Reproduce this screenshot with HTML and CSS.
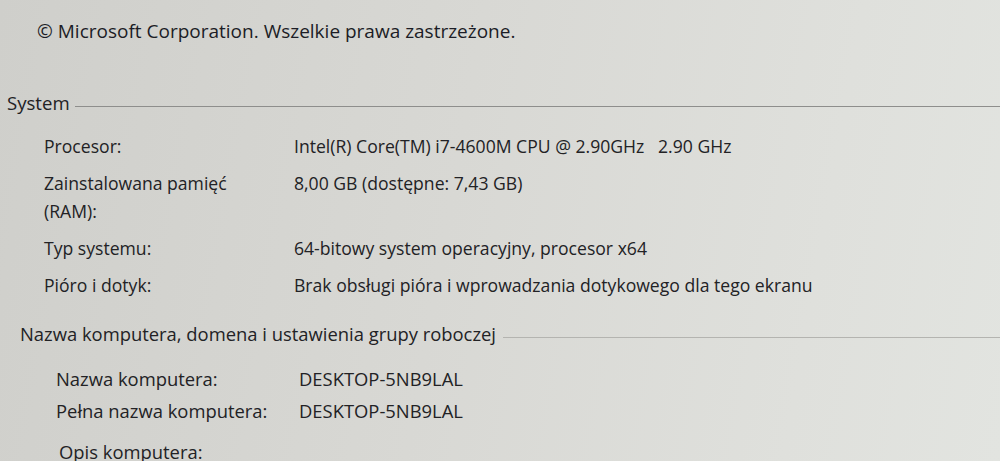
FILE: index.html
```html
<!DOCTYPE html>
<html lang="pl">
<head>
<meta charset="utf-8">
<title>System</title>
<link rel="stylesheet" href="styles.css">
</head>
<body>
<div class="page">
  <p class="copyright">© Microsoft Corporation. Wszelkie prawa zastrzeżone.</p>

  <div class="section-head system-head">
    <span class="section-title">System</span>
    <span class="rule"></span>
  </div>
  <div class="rows system-rows">
    <div class="label">Procesor:</div>
    <div class="value">Intel(R) Core(TM) i7-4600M CPU @ 2.90GHz&nbsp;&nbsp;&nbsp;2.90 GHz</div>
    <div class="label">Zainstalowana pamięć<br>(RAM):</div>
    <div class="value">8,00 GB (dostępne: 7,43 GB)</div>
    <div class="label">Typ systemu:</div>
    <div class="value">64-bitowy system operacyjny, procesor x64</div>
    <div class="label">Pióro i dotyk:</div>
    <div class="value">Brak obsługi pióra i wprowadzania dotykowego dla tego ekranu</div>
  </div>

  <div class="section-head name-head">
    <span class="section-title">Nazwa komputera, domena i ustawienia grupy roboczej</span>
    <span class="rule faint"></span>
  </div>
  <div class="rows name-rows">
    <div class="label">Nazwa komputera:</div>
    <div class="value">DESKTOP-5NB9LAL</div>
    <div class="label">Pełna nazwa komputera:</div>
    <div class="value">DESKTOP-5NB9LAL</div>
    <div class="label last">Opis komputera:</div>
    <div class="value"></div>
  </div>
</div>
</body>
</html>
```

FILE: styles.css
```css
html, body {
  margin: 0;
  padding: 0;
  height: 100%;
  overflow: hidden;
}

body {
  background: linear-gradient(100deg, #cfcfcb 0%, #d8d8d4 45%, #dfe0dc 80%, #e2e4e0 100%);
  font-family: "Open Sans", "Noto Sans", sans-serif;
  color: #222225;
  font-size: 17.6px;
}

.page {
  padding-top: 17px;
}

.copyright {
  margin: 0 0 0 37px;
  font-size: 19px;
  line-height: 28px;
  color: #1c1d26;
}

.section-head {
  display: flex;
  align-items: center;
  gap: 5px;
}

.system-head {
  margin-top: 44px;
  padding-left: 7px;
  font-size: 18.6px;
}

.name-head {
  margin-top: 21px;
  padding-left: 20px;
  font-size: 18.4px;
}

.section-title {
  line-height: 28px;
  white-space: nowrap;
}

.rule {
  flex: 1;
  height: 1px;
  background: #8e8e8c;
  margin-top: 6px;
}

.rule.faint {
  background: #b4b4b0;
  margin-left: 2px;
}

.rows {
  display: grid;
  row-gap: 9px;
  line-height: 28px;
}

.system-rows {
  margin-top: 15px;
  padding-left: 44px;
  grid-template-columns: 250px 1fr;
}

.name-rows {
  margin-top: 17px;
  padding-left: 56px;
  grid-template-columns: 243px 1fr;
  row-gap: 4px;
  font-size: 18.4px;
}

.name-rows .last {
  margin-top: 9px;
  padding-left: 3px;
}

.value {
  white-space: nowrap;
}
```
